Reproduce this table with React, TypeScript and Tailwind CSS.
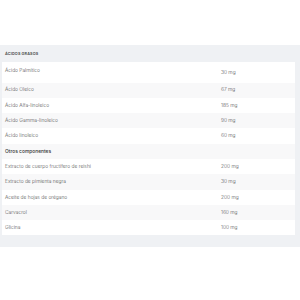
import React from "react";

const rows: { label: string; value?: string; group?: boolean }[] = [
  { label: "Ácido Palmítico", value: "30 mg" },
  { label: "Ácido Oleico", value: "67 mg" },
  { label: "Ácido Alfa-linoleico", value: "185 mg" },
  { label: "Ácido Gamma-linoleico", value: "90 mg" },
  { label: "Ácido linoleico", value: "60 mg" },
  { label: "Otros componentes", group: true },
  { label: "Extracto de cuerpo fructífero de reishi", value: "200 mg" },
  { label: "Extracto de pimienta negra", value: "30 mg" },
  { label: "Aceite de hojas de orégano", value: "200 mg" },
  { label: "Carvacrol", value: "160 mg" },
  { label: "Glicina", value: "100 mg" },
];

export default function App() {
  return (
    <div className="h-[300px] w-[300px] bg-white pt-[45px] font-['Inter',sans-serif] text-[#555]">
      <div className="bg-[#eff1f4] pb-[12px] pl-[2px] pr-[5px]">
        <div className="flex h-[17px] items-center pl-[3px] text-[3.8px] font-semibold uppercase tracking-[0.04em] text-[#444]">
          Ácidos grasos
        </div>
        <div className="bg-white">
          {rows.map((r, i) => (
            <div
              key={r.label}
              className={`flex items-center pl-[3px] text-[4.9px] font-light ${
                i === 0 ? "h-[20.5px]" : "h-[15.3px]"
              } ${i % 2 === 1 ? "bg-[#f8f8f9]" : "bg-white"}`}
            >
              <span
                className={`w-[216px] ${i === 0 ? "-mt-[4px]" : ""} ${
                  r.group ? "font-medium text-[#333]" : ""
                }`}
              >
                {r.label}
              </span>
              <span>{r.value}</span>
            </div>
          ))}
        </div>
      </div>
    </div>
  );
}
